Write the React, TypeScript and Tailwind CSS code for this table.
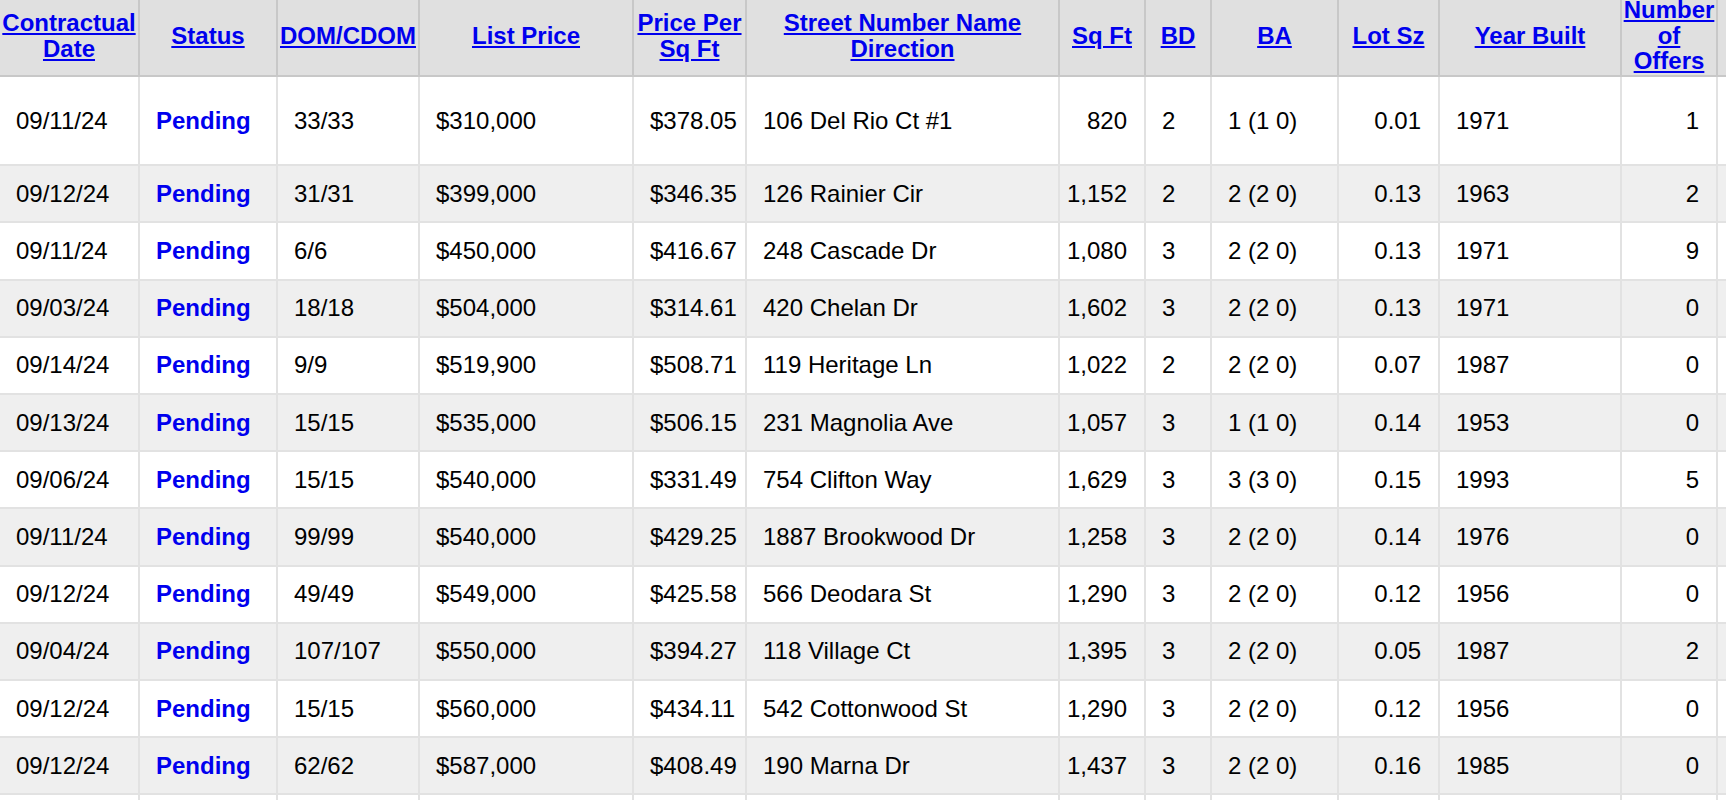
import * as React from 'react';

/**
 * Pending listings table - MLS style results grid.
 */

type Col = {
  label: string;
  width: string;
  align: 'left' | 'right';
};

const COLUMNS: Col[] = [
  { label: 'Contractual Date', width: 'w-[140px]', align: 'left' },
  { label: 'Status', width: 'w-[138px]', align: 'left' },
  { label: 'DOM/CDOM', width: 'w-[142px]', align: 'left' },
  { label: 'List Price', width: 'w-[214px]', align: 'left' },
  { label: 'Price Per Sq Ft', width: 'w-[113px]', align: 'left' },
  { label: 'Street Number Name Direction', width: 'w-[313px]', align: 'left' },
  { label: 'Sq Ft', width: 'w-[86px]', align: 'right' },
  { label: 'BD', width: 'w-[66px]', align: 'left' },
  { label: 'BA', width: 'w-[127px]', align: 'left' },
  { label: 'Lot Sz', width: 'w-[101px]', align: 'right' },
  { label: 'Year Built', width: 'w-[182px]', align: 'left' },
  { label: 'Number of Offers', width: 'w-[96px]', align: 'right' },
  { label: '', width: 'w-[140px]', align: 'left' },
];

const ROWS: string[][] = [
  ['09/11/24', 'Pending', '33/33', '$310,000', '$378.05', '106 Del Rio Ct #1', '820', '2', '1 (1 0)', '0.01', '1971', '1'],
  ['09/12/24', 'Pending', '31/31', '$399,000', '$346.35', '126 Rainier Cir', '1,152', '2', '2 (2 0)', '0.13', '1963', '2'],
  ['09/11/24', 'Pending', '6/6', '$450,000', '$416.67', '248 Cascade Dr', '1,080', '3', '2 (2 0)', '0.13', '1971', '9'],
  ['09/03/24', 'Pending', '18/18', '$504,000', '$314.61', '420 Chelan Dr', '1,602', '3', '2 (2 0)', '0.13', '1971', '0'],
  ['09/14/24', 'Pending', '9/9', '$519,900', '$508.71', '119 Heritage Ln', '1,022', '2', '2 (2 0)', '0.07', '1987', '0'],
  ['09/13/24', 'Pending', '15/15', '$535,000', '$506.15', '231 Magnolia Ave', '1,057', '3', '1 (1 0)', '0.14', '1953', '0'],
  ['09/06/24', 'Pending', '15/15', '$540,000', '$331.49', '754 Clifton Way', '1,629', '3', '3 (3 0)', '0.15', '1993', '5'],
  ['09/11/24', 'Pending', '99/99', '$540,000', '$429.25', '1887 Brookwood Dr', '1,258', '3', '2 (2 0)', '0.14', '1976', '0'],
  ['09/12/24', 'Pending', '49/49', '$549,000', '$425.58', '566 Deodara St', '1,290', '3', '2 (2 0)', '0.12', '1956', '0'],
  ['09/04/24', 'Pending', '107/107', '$550,000', '$394.27', '118 Village Ct', '1,395', '3', '2 (2 0)', '0.05', '1987', '2'],
  ['09/12/24', 'Pending', '15/15', '$560,000', '$434.11', '542 Cottonwood St', '1,290', '3', '2 (2 0)', '0.12', '1956', '0'],
  ['09/12/24', 'Pending', '62/62', '$587,000', '$408.49', '190 Marna Dr', '1,437', '3', '2 (2 0)', '0.16', '1985', '0'],
  ['', '', '', '', '', '', '', '', '', '', '', ''],
];

export default function App() {
  return (
    <div className="w-[1726px] h-[800px] overflow-hidden bg-white font-['Liberation_Sans',Arial,sans-serif] text-[24px] text-black">
      <div className="w-[1838px] -mt-[4px]">
        {/* Header */}
        <div className="flex h-[81px] bg-[#e0e0e0] border-b-2 border-[#c8c8c8]">
          {COLUMNS.map((col, i) => (
            <div
              key={i}
              className={`${col.width} shrink-0 flex items-center justify-center text-center px-[1px] border-r-2 border-[#c8c8c8]`}
            >
              {col.label && (
                <a href="#" className="font-bold text-[#0000ee] underline leading-[25.5px]">
                  {col.label}
                </a>
              )}
            </div>
          ))}
        </div>

        {/* Body rows */}
        {ROWS.map((row, r) => (
          <div
            key={r}
            className={`flex border-b-2 border-[#e2e2e2] ${r === 0 ? 'h-[89.3px]' : 'h-[57.2px]'} ${r % 2 === 1 ? 'bg-[#efefef]' : 'bg-white'}`}
          >
            {COLUMNS.map((col, i) => (
              <div
                key={i}
                className={`${col.width} shrink-0 flex items-center whitespace-nowrap border-r-2 border-[#e2e2e2] ${col.align === 'right' ? 'justify-end pr-[17px]' : 'pl-4'}`}
              >
                {i === 1 ? (
                  <span className="font-bold text-[#0000ee]">{row[i]}</span>
                ) : (
                  <span>{row[i] ?? ''}</span>
                )}
              </div>
            ))}
          </div>
        ))}
      </div>
    </div>
  );
}
